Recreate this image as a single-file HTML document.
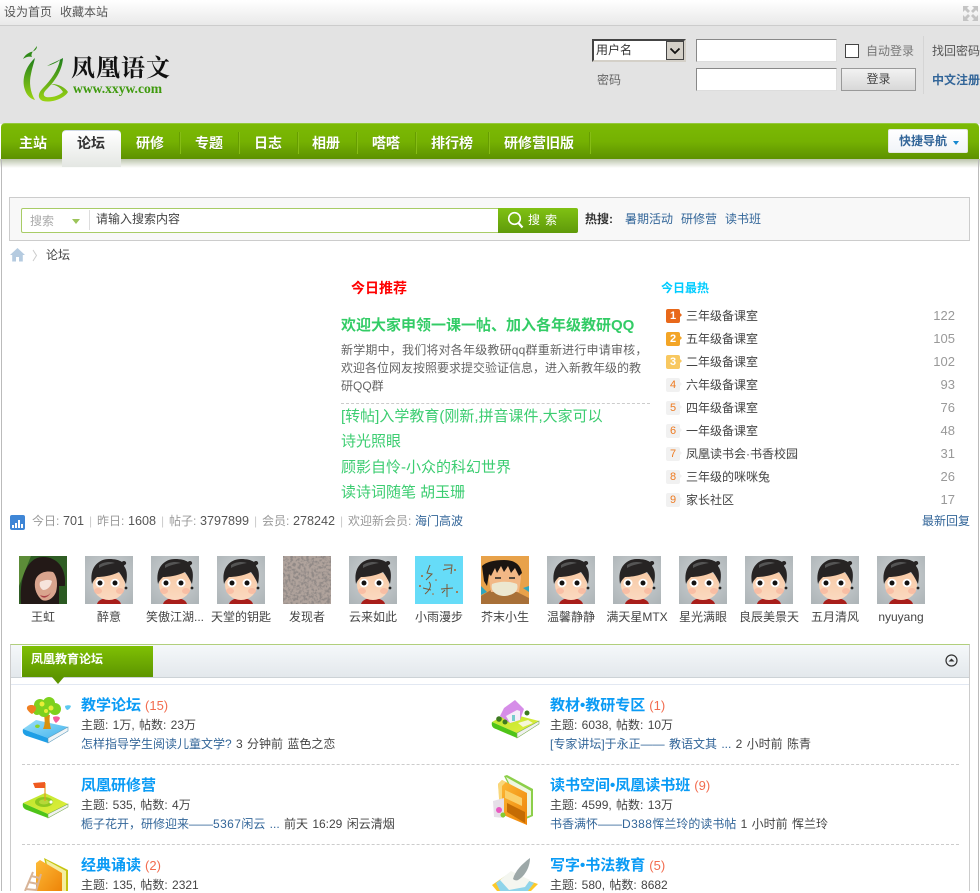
<!DOCTYPE html>
<html lang="zh"><head><meta charset="utf-8"><title>凤凰语文论坛</title>
<style>
*{box-sizing:border-box}
html,body{margin:0;padding:0;background:#fff}
body{width:980px;height:891px;position:relative;overflow:hidden;font:12px/16px "Liberation Sans","Noto Sans CJK SC",sans-serif;color:#444}
.a,.t,svg.i{position:absolute}
.t{white-space:nowrap;line-height:16px}
.b{color:#369}
.nv{position:absolute;top:135px;color:#fff;font-weight:bold;font-size:14px;line-height:16px;white-space:nowrap;text-shadow:0 1px 0 #5a8c00}
.sp{position:absolute;top:132px;width:1px;height:22px;background:#669d00;box-shadow:1px 0 0 #86bd16}
.tt{font-size:15px;font-weight:bold;color:#0a9bf5}
.tt i{font:normal 13px "Liberation Sans",sans-serif;color:#f26c4f;margin-left:4px}
.g{color:#3ccd71;font-size:15px}
.hn{left:686px;color:#444}
.hc{left:915px;width:40px;text-align:right;color:#999;font-size:13px}
.bd{position:absolute;left:666px;width:14px;height:14px;border-radius:2px;background:#f1f1f1;color:#ee7a20;font-size:11px;line-height:14px;text-align:center}
.bd:after{content:"";position:absolute;left:14px;top:4px;border:2.5px solid transparent;border-left-color:inherit;border-right:0}
.st{color:#999}.sv{color:#555;font-size:12.6px}.sl{color:#ccc}
.al{position:absolute;top:609px;width:66px;text-align:center;color:#444;white-space:nowrap;line-height:16px}
svg.av{position:absolute;top:556px;width:48px;height:48px}
.dash{position:absolute;height:0;border-top:1px dashed #ccc}
.w{word-spacing:1px}
.n{letter-spacing:.4px}
</style></head><body>
<svg width="0" height="0" style="position:absolute"><defs>
<linearGradient id="sk" x1="0" y1="0" x2="0" y2="1"><stop offset="0" stop-color="#f7c9a4"/><stop offset="1" stop-color="#fbd9c0"/></linearGradient>
<radialGradient id="bgf" cx=".5" cy=".45" r=".7"><stop offset="0" stop-color="#d0d4d6"/><stop offset="1" stop-color="#aeb5b8"/></radialGradient>
<symbol id="face" viewBox="0 0 48 48">
<rect width="48" height="48" fill="url(#bgf)"/>
<path d="M12 48c1-4 6-6 12-6s11 2 12 6z" fill="#a81e1a"/>
<ellipse cx="24" cy="29" rx="16" ry="15" fill="url(#sk)"/>
<ellipse cx="13" cy="35" rx="4" ry="3" fill="#f6b39b" opacity=".7"/><ellipse cx="35" cy="35" rx="4" ry="3" fill="#f6b39b" opacity=".7"/>
<path d="M7 28C4 12 13 3 24 3c6 0 10 1 13 3 1-2 5-1 4 2-1 1-2 1-2 2 4 5 3 12 2 18-2-4-4-8-7-12-8 4-17 5-22 5-2 2-4 4-5 7z" fill="#272424"/>
<path d="M14 9c4-3 11-4 16-2-5 1-11 2-16 5z" fill="#555"/>
<ellipse cx="15" cy="27" rx="4.500" ry="4.300" fill="#fff"/><ellipse cx="30" cy="27" rx="4.500" ry="4.300" fill="#fff"/>
<circle cx="15" cy="27" r="2.500" fill="#111"/><circle cx="30" cy="27" r="2.500" fill="#111"/>
<circle cx="41" cy="32" r="1.400" fill="#222"/>
</symbol>
<linearGradient id="blu" x1="0" y1="0" x2="1" y2="1"><stop offset="0" stop-color="#9adff8"/><stop offset="1" stop-color="#45b4ee"/></linearGradient>
<linearGradient id="grn" x1="0" y1="0" x2="1" y2="1"><stop offset="0" stop-color="#b8e62c"/><stop offset="1" stop-color="#e4ee3c"/></linearGradient>
<linearGradient id="org" x1="0" y1="0" x2="1" y2="1"><stop offset="0" stop-color="#fdbb38"/><stop offset="1" stop-color="#ee8408"/></linearGradient>
<filter id="grv" x="0" y="0" width="100%" height="100%"><feTurbulence type="fractalNoise" baseFrequency=".38" numOctaves="2" seed="4"/><feColorMatrix values="0 0 0 0 .28  0 0 0 0 .25  0 0 0 0 .24  4 0 0 0 -1.700"/></filter>
<linearGradient id="lg" x1="0" y1="0" x2="0" y2="1"><stop offset="0" stop-color="#1f7e1c"/><stop offset="1" stop-color="#9bd413"/></linearGradient>
</defs></svg>

<!-- top bar -->
<div class="a" style="left:0;top:0;width:980px;height:26px;background:linear-gradient(#fff,#e9e9e9);border-bottom:1px solid #ccc"></div>
<div class="t" style="left:4px;top:4px;color:#555">设为首页</div>
<div class="t" style="left:60px;top:4px;color:#555">收藏本站</div>
<svg class="i" style="left:963px;top:6px" width="15" height="15" viewBox="0 0 15 15" fill="#c4c4c4"><path d="M0 0h6L4 2l3 3-2 2-3-3-2 2zM15 0v6l-2-2-3 3-2-2 3-3-2-2zM0 15V9l2 2 3-3 2 2-3 3 2 2zM15 15H9l2-2-3-3 2-2 3 3 2-2z"/></svg>

<!-- header -->
<div class="a" style="left:0;top:26px;width:980px;height:98px;background:#e3e3e3"></div>
<svg class="i" style="left:18px;top:44px" width="56" height="62" viewBox="0 0 56 62" fill="none">
<path d="M19 2c0 3-2 5-6 6-3 1-6 3-8 7 3-2 6-3 9-2-2-3 2-7 5-11z" fill="#2f8a18"/>
<path d="M17 14C8 22 3 35 7 46c2 6 6 9 10 10-5-8-6-18-4-26 1-6 3-11 4-16z" fill="url(#lg)"/>
<path d="M29 22c4-1 9-3 13-6-2 10-9 20-17 28-6 6-5 11 0 13 8 2 21-2 25-9-3-5-11-9-20-8 7 0 12 3 15 8-4 4-12 6-17 5-3-1-3-4 0-7 8-8 16-18 17-32-5 3-11 5-16 8z" fill="url(#lg)"/>
</svg>
<div class="t" style="left:71px;top:50px;font:700 24px/32px 'Noto Serif CJK SC',serif;color:#111;letter-spacing:1px">凤凰语文</div>
<div class="t" style="left:73px;top:81px;font:bold 13.6px/15px 'Liberation Serif',serif;color:#3f9a0e">www.xxyw.com</div>

<!-- login -->
<div class="a" style="left:592px;top:39px;width:94px;height:23px;background:#fff;border:2px solid;border-color:#444 #d4d0c8 #d4d0c8 #444"></div>
<div class="t" style="left:596px;top:42px;color:#333">用户名</div>
<div class="a" style="left:666px;top:41px;width:18px;height:19px;background:#d4d0c8;border:1px solid #444"></div>
<svg class="i" style="left:669px;top:47px" width="12" height="8" viewBox="0 0 12 8"><path d="M1.500 1.500 6 6l4.500-4.500" fill="none" stroke="#111" stroke-width="1.800"/></svg>
<div class="a" style="left:696px;top:39px;width:141px;height:23px;background:#fff;border:1px solid;border-color:#888 #ddd #ddd #888"></div>
<div class="a" style="left:696px;top:68px;width:141px;height:23px;background:#fff;border:1px solid;border-color:#888 #ddd #ddd #888"></div>
<div class="a" style="left:845px;top:44px;width:14px;height:14px;background:#fff;border:1px solid #444"></div>
<div class="t" style="left:866px;top:43px;color:#777">自动登录</div>
<div class="a" style="left:923px;top:36px;width:1px;height:58px;background:#d5d5d5"></div>
<div class="t" style="left:932px;top:43px;color:#555">找回密码</div>
<div class="t" style="left:597px;top:72px;color:#666">密码</div>
<div class="a" style="left:841px;top:68px;width:75px;height:23px;background:linear-gradient(#f2f2f2,#d8d8d8);border:1px solid #999;text-align:center;line-height:20px;color:#444">登录</div>
<div class="t" style="left:932px;top:72px;color:#369;font-weight:bold">中文注册</div>

<!-- nav -->
<div class="a" style="left:1px;top:123px;width:978px;height:36px;border-radius:4px 4px 0 0;background:linear-gradient(#7cba04 0,#75b102 50%,#5d9100 100%);border-top:1px solid #93c83a"></div>
<div class="a" style="left:0;top:159px;width:980px;height:9px;background:linear-gradient(#bcc5ac,#fff)"></div>
<div class="a" style="left:1px;top:160px;width:1px;height:731px;background:#bbb"></div>
<div class="a" style="left:978px;top:160px;width:1px;height:731px;background:#bbb"></div>
<div class="a" style="left:62px;top:130px;width:59px;height:37px;border-radius:4px 4px 0 0;background:linear-gradient(#fff,#e4e7e3);border-top:1px solid #cfd8e6"></div>
<div class="nv" style="left:19px">主站</div>
<div class="nv" style="left:77px;color:#333;text-shadow:none">论坛</div>
<div class="nv" style="left:136px">研修</div>
<div class="nv" style="left:195px">专题</div>
<div class="nv" style="left:254px">日志</div>
<div class="nv" style="left:312px">相册</div>
<div class="nv" style="left:372px">嗒嗒</div>
<div class="nv" style="left:431px">排行榜</div>
<div class="nv" style="left:504px">研修营旧版</div>
<div class="sp" style="left:179px"></div><div class="sp" style="left:238px"></div><div class="sp" style="left:297px"></div><div class="sp" style="left:356px"></div><div class="sp" style="left:415px"></div><div class="sp" style="left:488px"></div><div class="sp" style="left:589px"></div>
<div class="a" style="left:888px;top:129px;width:80px;height:24px;background:linear-gradient(#fff,#f1f4f8);border-radius:2px;border:1px solid #e4e8e0"></div>
<div class="t" style="left:899px;top:133px;color:#369;font-weight:bold">快捷导航</div>
<div class="a" style="left:953px;top:141px;border:3.500px solid transparent;border-top:4px solid #1588d0;border-bottom:0"></div>

<!-- search -->
<div class="a" style="left:9px;top:197px;width:961px;height:44px;background:#f8f8f8;border:1px solid #ccc"></div>
<div class="a" style="left:21px;top:208px;width:480px;height:25px;background:#fff;border:1px solid #a8cc66;border-radius:2px 0 0 2px"></div>
<div class="t" style="left:30px;top:213px;color:#aaa">搜索</div>
<div class="a" style="left:72px;top:219px;border:4px solid transparent;border-top:5px solid #9cc45a;border-bottom:0"></div>
<div class="a" style="left:89px;top:210px;width:1px;height:20px;background:#ddd"></div>
<div class="t" style="left:96px;top:211px;color:#444">请输入搜索内容</div>
<div class="a" style="left:498px;top:208px;width:80px;height:25px;background:linear-gradient(#80c113,#5f9a0a);border-radius:0 2px 2px 0"></div>
<svg class="i" style="left:507px;top:211px" width="18" height="19" viewBox="0 0 18 19" fill="none" stroke="#fff" stroke-width="1.600"><circle cx="7.500" cy="7.500" r="5.800"/><path d="M11.500 12l4 4.500" stroke-width="2.200"/></svg>
<div class="t" style="left:528px;top:212px;color:#fff;letter-spacing:5px">搜索</div>
<div class="t" style="left:585px;top:211px;color:#333;font-weight:bold">热搜:</div>
<div class="t b" style="left:625px;top:211px">暑期活动</div>
<div class="t b" style="left:681px;top:211px">研修营</div>
<div class="t b" style="left:725px;top:211px">读书班</div>

<!-- breadcrumb -->
<svg class="i" style="left:10px;top:248px" width="15" height="14" viewBox="0 0 15 14" fill="#b5cbe0"><path d="M7.500 0 15 7h-2.200v6.500H9V9H6v4.500H2.200V7H0z"/></svg>
<svg class="i" style="left:32px;top:249px" width="6" height="13" viewBox="0 0 6 13"><path d="M1 1l3.500 5.500L1 12" fill="none" stroke="#ccc"/></svg>
<div class="t" style="left:46px;top:247px;color:#444">论坛</div>

<!-- recommendation -->
<div class="t" style="left:351px;top:280px;color:#f00;font-weight:bold;font-size:14px">今日推荐</div>
<div class="t" style="left:341px;top:318px;color:#33cc66;font-weight:bold;font-size:15px">欢迎大家申领一课一帖、加入各年级教研QQ</div>
<div class="t" style="left:341px;top:342px;color:#666;letter-spacing:.2px">新学期中，我们将对各年级教研qq群重新进行申请审核，</div>
<div class="t" style="left:341px;top:360px;color:#666">欢迎各位网友按照要求提交验证信息，进入新教年级的教</div>
<div class="t" style="left:341px;top:378px;color:#666">研QQ群</div>
<div class="dash" style="left:341px;top:403px;width:309px"></div>
<div class="t g" style="left:341px;top:409px">[转帖]入学教育(刚新,拼音课件,大家可以</div>
<div class="t g" style="left:341px;top:434px">诗光照眼</div>
<div class="t g" style="left:341px;top:460px">顾影自怜-小众的科幻世界</div>
<div class="t g" style="left:341px;top:485px">读诗词随笔 胡玉珊</div>

<!-- hot list -->
<div class="t" style="left:661px;top:280px;color:#0cf;font-weight:bold">今日最热</div>
<div class="bd" style="top:309px;background:#e8681a;color:#fff;font-weight:bold;border-color:#e8681a">1</div><div class="t hn" style="top:308px">三年级备课室</div><div class="t hc" style="top:308px">122</div>
<div class="bd" style="top:332px;background:#f3a526;color:#fff;font-weight:bold;border-color:#f3a526">2</div><div class="t hn" style="top:331px">五年级备课室</div><div class="t hc" style="top:331px">105</div>
<div class="bd" style="top:355px;background:#f8c860;color:#fff;font-weight:bold;border-color:#f8c860">3</div><div class="t hn" style="top:354px">二年级备课室</div><div class="t hc" style="top:354px">102</div>
<div class="bd" style="top:378px;border-color:#f1f1f1">4</div><div class="t hn" style="top:377px">六年级备课室</div><div class="t hc" style="top:377px">93</div>
<div class="bd" style="top:401px;border-color:#f1f1f1">5</div><div class="t hn" style="top:400px">四年级备课室</div><div class="t hc" style="top:400px">76</div>
<div class="bd" style="top:424px;border-color:#f1f1f1">6</div><div class="t hn" style="top:423px">一年级备课室</div><div class="t hc" style="top:423px">48</div>
<div class="bd" style="top:447px;border-color:#f1f1f1">7</div><div class="t hn" style="top:446px">凤凰读书会·书香校园</div><div class="t hc" style="top:446px">31</div>
<div class="bd" style="top:470px;border-color:#f1f1f1">8</div><div class="t hn" style="top:469px">三年级的咪咪兔</div><div class="t hc" style="top:469px">26</div>
<div class="bd" style="top:493px;border-color:#f1f1f1">9</div><div class="t hn" style="top:492px">家长社区</div><div class="t hc" style="top:492px">17</div>

<!-- stats -->
<svg class="i" style="left:10px;top:515px" width="15" height="15" viewBox="0 0 15 15"><rect width="15" height="15" rx="2" fill="#3f86d6"/><path d="M2 10h2v3H2zM5 8h2v5H5zM8 5h2v8H8zM11 9h2v4h-2z" fill="#fff"/></svg>
<div class="t st" style="left:32px;top:513px">今日:</div><div class="t sv" style="left:63px;top:513px">701</div><div class="t sl" style="left:89px;top:513px">|</div>
<div class="t st" style="left:97px;top:513px">昨日:</div><div class="t sv" style="left:128px;top:513px">1608</div><div class="t sl" style="left:161px;top:513px">|</div>
<div class="t st" style="left:169px;top:513px">帖子:</div><div class="t sv" style="left:200px;top:513px">3797899</div><div class="t sl" style="left:254px;top:513px">|</div>
<div class="t st" style="left:262px;top:513px">会员:</div><div class="t sv" style="left:293px;top:513px">278242</div><div class="t sl" style="left:340px;top:513px">|</div>
<div class="t st" style="left:348px;top:513px">欢迎新会员:</div><div class="t b" style="left:415px;top:513px">海门高波</div>
<div class="t b" style="left:922px;top:513px">最新回复</div>

<!-- avatars -->
<svg class="av" style="left:19px" viewBox="0 0 48 48"><rect width="48" height="48" fill="#2f5d24"/><path d="M0 0h12L4 20 0 30z" fill="#5c8c38"/><path d="M2 48C0 24 7 1 24 1c15 0 22 12 22 24 0 8-1 16-3 23z" fill="#231917"/><path d="M16 26c1-7 8-12 18-10 4 4 5 12 3 20-3 7-9 10-14 8-5-4-8-11-7-18z" fill="#d9a48e"/><path d="M21 26c4-2 9-3 12-1-1 6-5 9-9 9-3-2-4-5-3-8z" fill="#f6e4dc"/><path d="M21 39c4 2 9 1 11-3-2 5-8 8-11 3z" fill="#a83f46"/><path d="M40 30h8v18h-8z" fill="#2b5a22"/></svg>
<svg class="av" style="left:85px"><use href="#face" width="48" height="48"/></svg>
<svg class="av" style="left:151px"><use href="#face" width="48" height="48"/></svg>
<svg class="av" style="left:217px"><use href="#face" width="48" height="48"/></svg>
<svg class="av" style="left:283px" viewBox="0 0 48 48"><rect width="48" height="48" fill="#b0a39c"/><rect width="48" height="48" filter="url(#grv)"/></svg>
<svg class="av" style="left:349px"><use href="#face" width="48" height="48"/></svg>
<svg class="av" style="left:415px" viewBox="0 0 48 48"><rect width="48" height="48" fill="#66dcf8"/><g fill="none" stroke="#7a5a3a" stroke-width="1"><path d="M15 9l-3 8 5 1-6 6M14 26c3 3 1 8-4 12M8 32l8 2"/><path d="M29 9h8l-1 9M28 14l8-2M32 28v13M26 33l12-1M27 37l3-3"/></g><g fill="#b0602a"><circle cx="7" cy="20" r="1"/><circle cx="5" cy="30" r="1"/><circle cx="42" cy="36" r="1"/><circle cx="40" cy="14" r="1"/><circle cx="21" cy="24" r=".8"/><circle cx="18" cy="38" r=".8"/></g></svg>
<svg class="av" style="left:481px" viewBox="0 0 48 48"><rect width="48" height="48" fill="#e8a24a"/><path d="M0 40l10-6 26 2 12 6v6H0z" fill="#a87038"/><path d="M8 24C8 10 16 6 26 6c9 0 14 6 14 16l-2 14H10z" fill="#f2b886"/><path d="M1 10c4-4 12-6 22-6 9 0 16 3 18 13l-3 3-4-8-4 5-3-7-4 6-3-6-4 7-2-5-4 8-2-2-2 12L3 25z" fill="#1b1511"/><path d="M14 22h6M28 22h6" stroke="#222" stroke-width="1.500"/><path d="M11 28c8-3 17-3 25 0 2 6-2 11-12 12-9 0-15-5-13-12z" fill="#ece7d0"/><path d="M0 30l6 6-6 3zM42 32l6-2v6z" fill="#2ea6c0"/></svg>
<svg class="av" style="left:547px"><use href="#face" width="48" height="48"/></svg>
<svg class="av" style="left:613px"><use href="#face" width="48" height="48"/></svg>
<svg class="av" style="left:679px"><use href="#face" width="48" height="48"/></svg>
<svg class="av" style="left:745px"><use href="#face" width="48" height="48"/></svg>
<svg class="av" style="left:811px"><use href="#face" width="48" height="48"/></svg>
<svg class="av" style="left:877px"><use href="#face" width="48" height="48"/></svg>
<div class="al" style="left:10px">王虹</div><div class="al" style="left:76px">醉意</div><div class="al" style="left:142px">笑傲江湖...</div><div class="al" style="left:208px">天堂的钥匙</div><div class="al" style="left:274px">发现者</div><div class="al" style="left:340px">云来如此</div><div class="al" style="left:406px">小雨漫步</div><div class="al" style="left:472px">芥末小生</div><div class="al" style="left:538px">温馨静静</div><div class="al" style="left:604px">满天星MTX</div><div class="al" style="left:670px">星光满眼</div><div class="al" style="left:736px">良辰美景天</div><div class="al" style="left:802px">五月清风</div><div class="al" style="left:868px">nyuyang</div>

<!-- forum section -->
<div class="a" style="left:10px;top:644px;width:960px;height:247px;border:1px solid #ccc;border-top:1px solid #b1cf7c;border-bottom:0"></div>
<div class="a" style="left:11px;top:645px;width:958px;height:33px;background:linear-gradient(#f5f8fa,#e3e8ec);border-bottom:1px solid #ccd2d6"></div>
<div class="a" style="left:11px;top:684px;width:958px;height:1px;background:#e2e8f2"></div>
<div class="a" style="left:22px;top:646px;width:131px;height:31px;background:linear-gradient(#7fc004,#5d9500);box-shadow:-1px 0 0 #fff"></div>
<div class="a" style="left:52px;top:677px;border:6px solid transparent;border-top:7px solid #5d9500;border-bottom:0"></div>
<div class="t" style="left:31px;top:651px;color:#fff;font-weight:bold">凤凰教育论坛</div>
<svg class="i" style="left:945px;top:654px" width="13" height="13" viewBox="0 0 13 13"><circle cx="6.500" cy="6.500" r="5.500" fill="none" stroke="#333" stroke-width="1.200"/><path d="M3.500 7.500h6l-3-3z" fill="#333"/></svg>

<!-- forum icons -->
<svg class="i" style="left:22px;top:696px" width="50" height="50" viewBox="0 0 50 50">
<path d="M1 33 14 24l32 7-20 11z" fill="url(#blu)"/>
<path d="M1 33c-1 4 1 6 4 7l21 7v-5z" fill="#1f9fe6"/>
<path d="M26 42l20-11v4L26 47z" fill="#f0f4f6" stroke="#5a9abc" stroke-width=".6"/>
<path d="M21 33c2-4 2-8 1-14h6c-1 5 0 10 1 14z" fill="#d8910f"/>
<g fill="#7ed11e"><circle cx="18" cy="9" r="6"/><circle cx="27" cy="7" r="6"/><circle cx="33" cy="13" r="6"/><circle cx="22" cy="15" r="6"/><circle cx="15" cy="15" r="4"/></g>
<g fill="#e8ee38"><circle cx="20" cy="8" r="2.500"/><circle cx="29" cy="12" r="2.500"/><circle cx="24" cy="15" r="2"/></g>
<path d="M5 13c-1-4 5-5 8-3 2 2 1 5-3 8-2-1-4-3-5-5z" fill="#f07f22"/>
<path d="M43 10c2-1 5-1 6 0-1 3-3 4-4 4-1-1-2-2-2-4z" fill="#5cc8f0"/>
<path d="M31 21c3-1 6-1 7 1-1 3-3 4-4 5-1-1-3-3-3-6z" fill="#f45c9c"/>
<path d="M13 30c1-2 4-2 5 0-1 2-2 2-2 2-1 0-3 0-3-2z" fill="#86d42a"/>
</svg>
<svg class="i" style="left:22px;top:780px" width="50" height="40" viewBox="0 0 50 40">
<path d="M1 23 23 13l23 11-20 10z" fill="url(#grn)"/>
<path d="M1 23c-1 4 1 6 4 7l21 8v-4z" fill="#4fc418"/>
<path d="M26 34l20-10v3L26 38z" fill="#f0f0f0" stroke="#7aae50" stroke-width=".6"/>
<ellipse cx="22" cy="22" rx="9" ry="5" fill="#8dc820"/><ellipse cx="22" cy="22" rx="5" ry="2.500" fill="#b6d838"/>
<circle cx="29" cy="22" r="1.600" fill="#fff"/>
<path d="M23 3v18" stroke="#e6a020" stroke-width="1.200"/>
<path d="M11 3l12-1v6H13z" fill="#ef5a20"/>
</svg>
<svg class="i" style="left:22px;top:858px" width="50" height="33" viewBox="0 0 50 33">
<path d="M22 0l24 12v21H30z" fill="#c6c410"/><path d="M24 2l20 11v20H30z" fill="#f4eea0"/>
<path d="M14 5l4-3 22 13v18H14z" fill="url(#org)"/>
<path d="M11 14 3 33M19 16l-5 17" stroke="#d8b498" stroke-width="2"/><path d="M6 24l10 2M9 18l9 2M3 31l11 1" stroke="#d8b498" stroke-width="2"/>
</svg>
<svg class="i" style="left:491px;top:696px" width="50" height="44" viewBox="0 0 50 44">
<path d="M1 26 17 17l31 8-22 12z" fill="url(#grn)"/>
<path d="M1 26c-1 4 1 6 4 7l21 9v-5z" fill="#4fc418"/>
<path d="M26 37l22-12v3L26 42z" fill="#f0f0f0" stroke="#7aae50" stroke-width=".6"/>
<path d="M9 20 13 12 24 4l9 9-4 11-10 3z" fill="#d68de8"/>
<path d="M15 20l11-6 3 1v9l-10 3z" fill="#f5eef8"/><path d="M21 19h3v6h-3z" fill="#7cc"/>
<circle cx="8" cy="23" r="2.800" fill="#3d7a20"/><circle cx="14" cy="26" r="2.500" fill="#3d7a20"/><circle cx="36" cy="17" r="2.500" fill="#3d7a20"/>
<path d="M27 27l10-3 5 3-10 4z" fill="#f6f6d8"/>
</svg>
<svg class="i" style="left:491px;top:774px" width="50" height="52" viewBox="0 0 50 52">
<path d="M13 2l3-1 26 14v27l-7 3z" fill="#8ccf4a"/><path d="M15 3l25 14v24l-5 2z" fill="#eef6e0"/>
<path d="M7 10l4-4 25 13v32L10 40z" fill="url(#org)"/>
<path d="M7 10l4-4 4 2-4 4v27l-2 1z" fill="#f9d77a"/>
<path d="M14 16l17 8v8L14 24z" fill="#fad06a"/><path d="M16 29l18 9v11L16 38z" fill="#c46c04"/>
<path d="M2 27l11-3v20l-10-1z" fill="#e6dfe8"/>
<circle cx="8" cy="36" r="3" fill="#e85ac0"/><circle cx="12" cy="41" r="2.500" fill="#86cc30"/>
</svg>
<svg class="i" style="left:491px;top:857px" width="50" height="34" viewBox="0 0 50 34">
<path d="M1 28 17 17l30 10-7 7H6z" fill="#fdc928"/>
<path d="M5 26 18 16l25 10-6 8H9z" fill="#8fd4ea"/>
<path d="M9 23 20 14l19 9-5 7-16 3z" fill="#f4f6f0"/>
<path d="M22 22c2-8 9-15 17-21 0 9-5 18-12 22-2 1-4 0-5-1z" fill="#9da8a8"/>
</svg>

<!-- forum rows -->
<div class="t tt" style="left:81px;top:698px">教学论坛<i>(15)</i></div>
<div class="t w" style="left:81px;top:717px">主题: 1万, 帖数: 23万</div>
<div class="t w" style="left:81px;top:736px"><span class="b">怎样指导学生阅读儿童文学?</span> 3 分钟前 蓝色之恋</div>
<div class="t tt" style="left:550px;top:698px">教材•教研专区<i>(1)</i></div>
<div class="t w" style="left:550px;top:717px">主题: 6038, 帖数: 10万</div>
<div class="t w" style="left:550px;top:736px"><span class="b">[专家讲坛]于永正—— 教语文其 ...</span> 2 小时前 陈青</div>
<div class="dash" style="left:22px;top:764px;width:937px"></div>
<div class="t tt" style="left:81px;top:778px">凤凰研修营</div>
<div class="t w" style="left:81px;top:797px">主题: 535, 帖数: 4万</div>
<div class="t w" style="left:81px;top:816px"><span class="b">栀子花开，研修迎来——<span class="n">5367</span>闲云 ...</span> 前天 16:29 闲云清烟</div>
<div class="t tt" style="left:550px;top:778px">读书空间•凤凰读书班<i>(9)</i></div>
<div class="t w" style="left:550px;top:797px">主题: 4599, 帖数: 13万</div>
<div class="t w" style="left:550px;top:816px"><span class="b">书香满怀——<span class="n">D388</span>恽兰玲的读书帖</span> 1 小时前 恽兰玲</div>
<div class="dash" style="left:22px;top:844px;width:937px"></div>
<div class="t tt" style="left:81px;top:858px">经典诵读<i>(2)</i></div>
<div class="t w" style="left:81px;top:877px">主题: 135, 帖数: 2321</div>
<div class="t tt" style="left:550px;top:858px">写字•书法教育<i>(5)</i></div>
<div class="t w" style="left:550px;top:877px">主题: 580, 帖数: 8682</div>
</body></html>
